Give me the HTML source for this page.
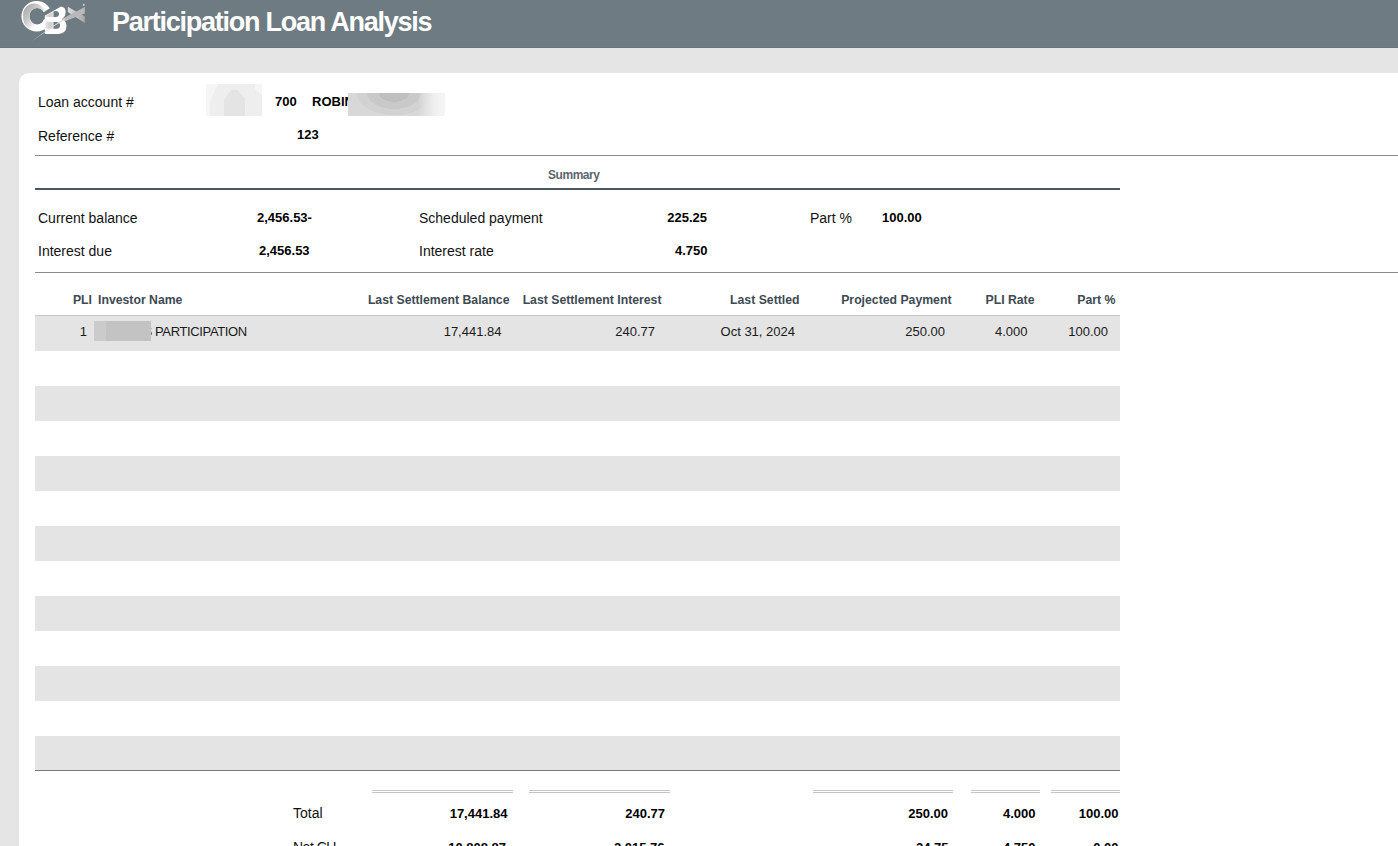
<!DOCTYPE html>
<html><head><meta charset="utf-8"><title>Participation Loan Analysis</title>
<style>
html,body{margin:0;padding:0;}
body{width:1398px;height:846px;overflow:hidden;position:relative;background:#e5e5e5;font-family:"Liberation Sans",sans-serif;}
.hdr{position:absolute;left:0;top:0;width:1398px;height:47px;background:#6e7b82;border-bottom:1px solid #66737a;}
.title{position:absolute;left:112px;top:6.56px;font-size:27px;font-weight:700;color:#fff;letter-spacing:-1.25px;white-space:nowrap;line-height:normal;}
.panel{position:absolute;left:19px;top:73px;width:1400px;height:800px;background:#fff;border-radius:10px 0 0 0;}
.t{position:absolute;white-space:nowrap;line-height:normal;}
.r{position:absolute;}
.logo{position:absolute;left:0;top:0;}
</style></head><body>
<div class="hdr"></div>
<svg class="logo" width="100" height="47" viewBox="0 0 100 47">
<defs>
<linearGradient id="gc" gradientUnits="userSpaceOnUse" x1="24" y1="4" x2="44" y2="20"><stop offset="0" stop-color="#a4a4a4"/><stop offset="0.45" stop-color="#c6c6c6"/><stop offset="0.7" stop-color="#e4e4e4"/><stop offset="0.88" stop-color="#ffffff"/></linearGradient>
<linearGradient id="gx" x1="0" y1="0" x2="1" y2="0"><stop offset="0" stop-color="#dcdcdc"/><stop offset="0.5" stop-color="#c4c4c4"/><stop offset="1" stop-color="#a6a6a6"/></linearGradient>
<linearGradient id="gs" x1="0" y1="0" x2="1" y2="0"><stop offset="0" stop-color="#e8e8e8"/><stop offset="0.6" stop-color="#cdcdcd"/><stop offset="1" stop-color="#e2e2e2"/></linearGradient>
<clipPath id="cl"><path d="M0 0 H62.9 L37.1 16.3 L70 30 V47 H0 Z"/></clipPath>
</defs>
<path fill="#ffffff" fill-rule="evenodd" clip-path="url(#cl)" d="M21.4 16.2 A15.3 15.3 0 1 0 52 16.2 A15.3 15.3 0 1 0 21.4 16.2 Z M29.45 16.3 A7.65 8.4 0 1 0 44.75 16.3 A7.65 8.4 0 1 0 29.45 16.3 Z"/>
<path fill="url(#gc)" fill-rule="evenodd" clip-path="url(#cl)" d="M23.2 16.4 A11 11.4 0 1 0 45 16.4 A11 11.4 0 1 0 23.2 16.4 Z M29.45 16.3 A7.65 8.4 0 1 0 44.75 16.3 A7.65 8.4 0 1 0 29.45 16.3 Z"/>
<path fill="url(#gx)" d="M67.8 6.7 L84.8 16.5 L84.8 23 L67.8 11.9 Z"/>
<path fill="#b9b9b9" d="M60.5 19.8 L84.8 7.1 L84.8 13.5 L65 21.2 Z"/>
<path fill="#ffffff" fill-rule="evenodd" d="M44.8 34.1 L44.8 15.8 L61 6.6 Q65.8 7.3 65.6 12.5 Q65.3 17 61.5 19.3 Q66.6 21 66.5 26.3 Q66 33.7 58.5 33.9 Z M53.3 11.6 L56 11 Q59 11.4 59 14 Q59 16.9 56 16.9 L53.3 16.9 Z M53.3 22 L56.5 22 Q60 22.3 60 25.3 Q60 28.7 56.5 28.7 L53.3 28.7 Z"/>
<path fill="url(#gs)" d="M45.3 15.5 L53.3 11.6 L53.3 16.9 L45.3 17 Z"/>
<path fill="url(#gs)" d="M45.3 21.6 L53.3 22 L53.3 28.7 L45.3 28.7 Z"/>
<path fill="#dcdcdc" d="M31.2 41.4 L53 25.8 L65 18.6 L65.5 19.6 L53.5 26.6 Z"/>
<circle cx="83.8" cy="4.8" r="1.1" fill="#cccccc"/>
</svg>

<div class="title">Participation Loan Analysis</div>
<div class="panel"></div>
<div class="r" style="left:35px;top:155px;width:1363px;height:1px;background:#8a8a8a;"></div>
<div class="r" style="left:35px;top:188px;width:1085px;height:2px;background:#4b575e;"></div>
<div class="r" style="left:35px;top:272px;width:1363px;height:1px;background:#8a8a8a;"></div>
<div class="r" style="left:35px;top:315px;width:1085px;height:1px;background:#c6c6c6;"></div>
<div class="r" style="left:35px;top:316px;width:1085px;height:35px;background:#e4e4e4;"></div>
<div class="r" style="left:35px;top:386px;width:1085px;height:35px;background:#e4e4e4;"></div>
<div class="r" style="left:35px;top:456px;width:1085px;height:35px;background:#e4e4e4;"></div>
<div class="r" style="left:35px;top:526px;width:1085px;height:35px;background:#e4e4e4;"></div>
<div class="r" style="left:35px;top:596px;width:1085px;height:35px;background:#e4e4e4;"></div>
<div class="r" style="left:35px;top:666px;width:1085px;height:35px;background:#e4e4e4;"></div>
<div class="r" style="left:35px;top:736px;width:1085px;height:35px;background:#e4e4e4;"></div>
<div class="r" style="left:35px;top:770px;width:1085px;height:1px;background:#7a7a7a;"></div>
<div class="r" style="left:372px;top:790px;width:141px;height:1px;background:#c4c4c4;"></div>
<div class="r" style="left:372px;top:792px;width:141px;height:1px;background:#c4c4c4;"></div>
<div class="r" style="left:529px;top:790px;width:141px;height:1px;background:#c4c4c4;"></div>
<div class="r" style="left:529px;top:792px;width:141px;height:1px;background:#c4c4c4;"></div>
<div class="r" style="left:813px;top:790px;width:140px;height:1px;background:#c4c4c4;"></div>
<div class="r" style="left:813px;top:792px;width:140px;height:1px;background:#c4c4c4;"></div>
<div class="r" style="left:971px;top:790px;width:69px;height:1px;background:#c4c4c4;"></div>
<div class="r" style="left:971px;top:792px;width:69px;height:1px;background:#c4c4c4;"></div>
<div class="r" style="left:1051px;top:790px;width:69px;height:1px;background:#c4c4c4;"></div>
<div class="r" style="left:1051px;top:792px;width:69px;height:1px;background:#c4c4c4;"></div>
<div class="t" style="top:94.33px;font-size:14px;font-weight:400;color:#111;left:38px;">Loan account #</div>
<div class="t" style="top:128.33px;font-size:14px;font-weight:400;color:#111;left:38px;">Reference #</div>
<div class="t" style="top:210.33px;font-size:14px;font-weight:400;color:#111;left:38px;">Current balance</div>
<div class="t" style="top:243.33px;font-size:14px;font-weight:400;color:#111;left:38px;">Interest due</div>
<div class="t" style="top:210.33px;font-size:14px;font-weight:400;color:#111;left:419px;">Scheduled payment</div>
<div class="t" style="top:243.33px;font-size:14px;font-weight:400;color:#111;left:419px;">Interest rate</div>
<div class="t" style="top:210.33px;font-size:14px;font-weight:400;color:#111;left:810px;">Part %</div>
<div class="t" style="top:805.33px;font-size:14px;font-weight:400;color:#111;left:293px;">Total</div>
<div class="t" style="top:839.33px;font-size:14px;font-weight:400;color:#111;letter-spacing:-0.5px;left:293px;">Net CU</div>
<div class="t" style="top:94.23px;font-size:13px;font-weight:700;color:#000;left:275px;">700</div>
<div class="t" style="top:94.23px;font-size:13px;font-weight:700;color:#000;left:312px;">ROBIN</div>
<div class="t" style="top:127.23px;font-size:13px;font-weight:700;color:#000;left:297px;">123</div>
<div class="t" style="top:210.24px;font-size:13px;font-weight:700;color:#000;left:257px;">2,456.53-</div>
<div class="t" style="top:243.24px;font-size:13px;font-weight:700;color:#000;left:259px;">2,456.53</div>
<div class="t" style="top:210.24px;font-size:13px;font-weight:700;color:#000;right:691px;text-align:right;">225.25</div>
<div class="t" style="top:243.24px;font-size:13px;font-weight:700;color:#000;right:690.5px;text-align:right;">4.750</div>
<div class="t" style="top:210.24px;font-size:13px;font-weight:700;color:#000;left:882px;">100.00</div>
<div class="t" style="top:168.14px;font-size:12px;font-weight:700;color:#5b666d;letter-spacing:-0.45px;left:548px;">Summary</div>
<div class="t" style="top:292.91px;font-size:12.25px;font-weight:700;color:#3d4a52;right:1306px;text-align:right;">PLI</div>
<div class="t" style="top:292.91px;font-size:12.25px;font-weight:700;color:#3d4a52;right:888.5px;text-align:right;">Last Settlement Balance</div>
<div class="t" style="top:292.91px;font-size:12.25px;font-weight:700;color:#3d4a52;right:736.5px;text-align:right;">Last Settlement Interest</div>
<div class="t" style="top:292.91px;font-size:12.25px;font-weight:700;color:#3d4a52;right:598.5px;text-align:right;">Last Settled</div>
<div class="t" style="top:292.91px;font-size:12.25px;font-weight:700;color:#3d4a52;right:446.5px;text-align:right;">Projected Payment</div>
<div class="t" style="top:292.91px;font-size:12.25px;font-weight:700;color:#3d4a52;right:363.5px;text-align:right;">PLI Rate</div>
<div class="t" style="top:292.91px;font-size:12.25px;font-weight:700;color:#3d4a52;right:282.5px;text-align:right;">Part %</div>
<div class="t" style="top:292.91px;font-size:12.25px;font-weight:700;color:#3d4a52;left:98px;">Investor Name</div>
<div class="t" style="top:324.24px;font-size:13px;font-weight:400;color:#1a1a1a;right:1311px;text-align:right;">1</div>
<div class="t" style="top:324.24px;font-size:13px;font-weight:400;color:#1a1a1a;right:896.5px;text-align:right;">17,441.84</div>
<div class="t" style="top:324.24px;font-size:13px;font-weight:400;color:#1a1a1a;right:743px;text-align:right;">240.77</div>
<div class="t" style="top:324.24px;font-size:13px;font-weight:400;color:#1a1a1a;right:603px;text-align:right;">Oct 31, 2024</div>
<div class="t" style="top:324.24px;font-size:13px;font-weight:400;color:#1a1a1a;right:453px;text-align:right;">250.00</div>
<div class="t" style="top:324.24px;font-size:13px;font-weight:400;color:#1a1a1a;right:370.5px;text-align:right;">4.000</div>
<div class="t" style="top:324.24px;font-size:13px;font-weight:400;color:#1a1a1a;right:290px;text-align:right;">100.00</div>
<div class="t" style="top:324.24px;font-size:13px;font-weight:400;color:#1a1a1a;left:143.5px;">S</div>
<div class="t" style="top:324.24px;font-size:13px;font-weight:400;color:#1a1a1a;letter-spacing:-0.36px;left:155px;">PARTICIPATION</div>
<div class="t" style="top:806.24px;font-size:13px;font-weight:700;color:#000;right:890.5px;text-align:right;">17,441.84</div>
<div class="t" style="top:806.24px;font-size:13px;font-weight:700;color:#000;right:733px;text-align:right;">240.77</div>
<div class="t" style="top:806.24px;font-size:13px;font-weight:700;color:#000;right:450px;text-align:right;">250.00</div>
<div class="t" style="top:806.24px;font-size:13px;font-weight:700;color:#000;right:362.5px;text-align:right;">4.000</div>
<div class="t" style="top:806.24px;font-size:13px;font-weight:700;color:#000;right:279.5px;text-align:right;">100.00</div>
<div class="t" style="top:840.24px;font-size:13px;font-weight:700;color:#000;right:892px;text-align:right;">10,808.87</div>
<div class="t" style="top:840.24px;font-size:13px;font-weight:700;color:#000;right:733.5px;text-align:right;">2,015.76</div>
<div class="t" style="top:840.24px;font-size:13px;font-weight:700;color:#000;right:449.5px;text-align:right;">24.75</div>
<div class="t" style="top:840.24px;font-size:13px;font-weight:700;color:#000;right:362.5px;text-align:right;">4.750</div>
<div class="t" style="top:840.24px;font-size:13px;font-weight:700;color:#000;right:279.5px;text-align:right;">0.00</div>
<div class="r" style="left:206px;top:84px;width:56px;height:32px;background:#f5f5f5"></div>
<div class="r" style="left:206px;top:84px;width:56px;height:32px;background:#eeeeee;clip-path:polygon(12px 0,49px 0,49px 5.5px,56px 11px,56px 32px,4px 32px,4px 17.5px,8px 8px)"></div>
<div class="r" style="left:224px;top:90px;width:21px;height:26px;background:#e4e4e4;clip-path:polygon(0 26px,0 10px,7px 0,13px 0,21px 8px,21px 26px)"></div>
<div class="r" style="left:348px;top:93px;width:97px;height:23px;background:linear-gradient(to right,rgba(244,244,244,0) 0,rgba(244,244,244,0) 72%,rgba(230,230,230,.7) 80%,rgba(240,240,240,.9) 88%,#f4f4f4 96%),radial-gradient(ellipse 37px 22px at 46px 0px,#bfbfbf 0%,#bfbfbf 40%,#c9c9c9 41%,#c9c9c9 72%,#d2d2d2 73%,#d2d2d2 100%,#d8d8d8 101%)"></div>
<div class="r" style="left:94px;top:321px;width:57px;height:20px;background:#c3c3c3"></div>
<div class="r" style="left:94px;top:321px;width:12px;height:20px;background:#cbcbcb"></div>
</body></html>
